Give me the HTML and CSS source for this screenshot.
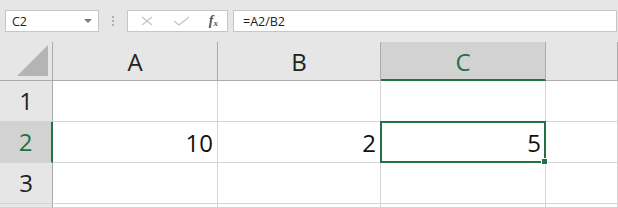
FILE: index.html
```html
<!DOCTYPE html>
<html lang="en">

<head>
  <meta charset="UTF-8">
  <title>Excel</title>
  <link rel="stylesheet" href="styles.css">
</head>

<body>
  <div class="toolbar">
    <div class="namebox">
      <span>C2</span>
      <svg class="arrow" width="8" height="5" viewBox="0 0 8 5"><path d="M0 0h8L4 4z" fill="#7a7a7a"/></svg>
    </div>
    <div class="grip"><i></i><i></i><i></i></div>
    <div class="funcbox">
      <svg width="14" height="10" viewBox="0 0 14 10"><path d="M2 1l10 8M12 1L2 9" stroke="#c4c4c4" stroke-width="1.3" fill="none"/></svg>
      <svg width="17" height="10" viewBox="0 0 17 10"><path d="M1 5l5 4L16 1" stroke="#c4c4c4" stroke-width="1.3" fill="none"/></svg>
      <span class="fx">f<sub>x</sub></span>
    </div>
    <div class="formula">=A2/B2</div>
  </div>

  <div class="sheet">
    <div class="corner"><svg width="32" height="31" viewBox="0 0 32 31"><path d="M31 0v31H0z" fill="#b4b4b4"/></svg></div>
    <div class="col">A</div>
    <div class="col">B</div>
    <div class="col active">C</div>
    <div class="col"></div>

    <div class="row">1</div>
    <div class="cell"></div>
    <div class="cell"></div>
    <div class="cell"></div>
    <div class="cell"></div>

    <div class="row active">2</div>
    <div class="cell">10</div>
    <div class="cell">2</div>
    <div class="cell selected">5</div>
    <div class="cell"></div>

    <div class="row">3</div>
    <div class="cell"></div>
    <div class="cell"></div>
    <div class="cell"></div>
    <div class="cell"></div>

    <div class="row"></div>
    <div class="cell"></div>
    <div class="cell"></div>
    <div class="cell"></div>
    <div class="cell"></div>
  </div>
</body>

</html>
```

FILE: styles.css
```css
body {
  margin: 0;
  width: 618px;
  height: 208px;
  overflow: hidden;
  background-color: #e6e6e6;
  font-family: "Open Sans", "Liberation Sans", sans-serif;
}

.toolbar {
  display: flex;
  height: 42px;
  padding: 10px 1px 0 5px;
  box-sizing: border-box;
  font-size: 12.5px;
  color: #222;
}

.namebox,
.funcbox,
.formula {
  height: 22px;
  box-sizing: border-box;
  background-color: #fff;
  border: 1px solid #c6c6c6;
  display: flex;
  align-items: center;
}

.namebox {
  width: 94px;
  padding: 0 6px 0 6px;
  justify-content: space-between;
}

.grip {
  width: 28px;
  display: flex;
  flex-direction: column;
  align-items: center;
  justify-content: center;
  gap: 2px;
  height: 22px;
}

.grip i {
  width: 2px;
  height: 2px;
  background-color: #b0b0b0;
}

.funcbox {
  width: 101px;
  padding: 0 9px 0 12px;
  justify-content: space-between;
}

.fx {
  font-family: "Liberation Serif", serif;
  font-style: italic;
  font-weight: bold;
  font-size: 14px;
  color: #555;
  line-height: 1;
}

.fx sub {
  font-size: 9px;
  vertical-align: -1px;
}

.formula {
  flex: 1;
  margin-left: 5px;
  padding-left: 9px;
}

.sheet {
  display: grid;
  grid-template-columns: 53px 165px 163px 165px 1fr;
  grid-template-rows: 39px 41px 41px 41px 1fr;
  height: 166px;
  font-size: 24px;
}

.sheet > div {
  box-sizing: border-box;
  display: flex;
  align-items: center;
  line-height: 1;
}

.corner {
  border-right: 1px solid #ababab;
  border-bottom: 1px solid #ababab;
  justify-content: flex-end;
  align-items: flex-end !important;
  padding: 0 3px 4px 0;
}

.col {
  justify-content: center;
  border-right: 1px solid #ababab;
  border-bottom: 1px solid #ababab;
  color: #222;
  padding-top: 2px;
}

.col.active {
  background-color: #d2d2d2;
  color: #217346;
  border-bottom: 2px solid #217346;
}

.row {
  justify-content: center;
  border-right: 1px solid #ababab;
  border-bottom: 1px solid #d4d4d4;
  color: #222;
}

.row.active {
  background-color: #d2d2d2;
  color: #217346;
  border-right: 2px solid #217346;
}

.cell {
  background-color: #fff;
  border-right: 1px solid #d4d4d4;
  border-bottom: 1px solid #d4d4d4;
  justify-content: flex-end;
  padding: 2px 4px 0 0;
  color: #111;
}

.selected {
  position: relative;
}

.selected::after {
  content: "";
  position: absolute;
  top: -1px;
  left: -1px;
  right: -1px;
  bottom: -1px;
  border: 2px solid #217346;
}

.selected::before {
  content: "";
  position: absolute;
  right: -3px;
  bottom: -3px;
  width: 5px;
  height: 5px;
  background-color: #217346;
  border: 1px solid #fff;
  z-index: 1;
}
```
